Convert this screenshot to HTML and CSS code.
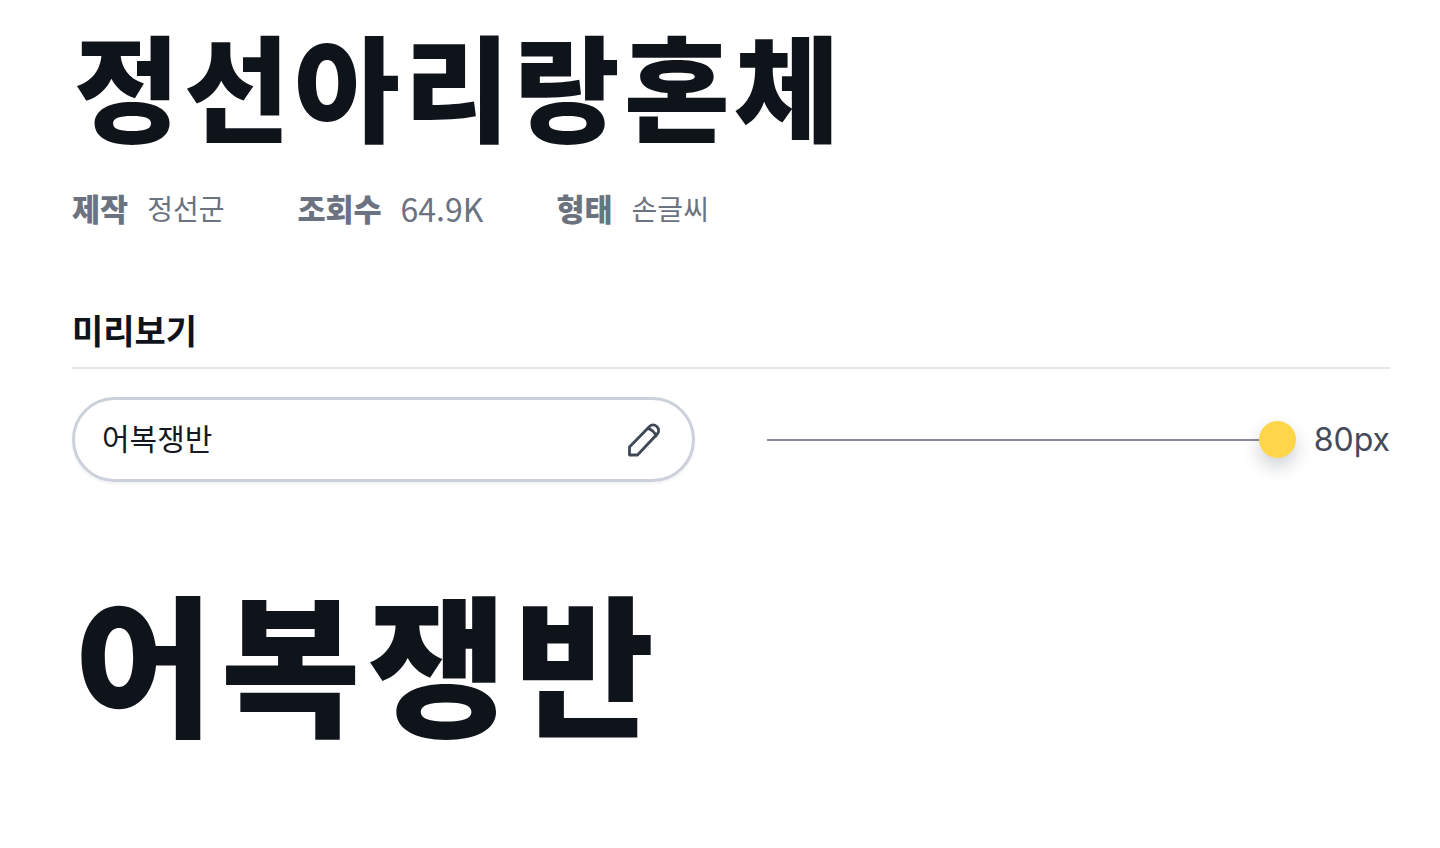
FILE: index.html
```html
<!DOCTYPE html>
<html lang="ko">
<head>
  <meta charset="UTF-8">
  <title>정선아리랑혼체</title>
  <link rel="stylesheet" href="styles.css">
</head>
<body>
  <main class="font-page">
    <h1 class="font-title">정선아리랑혼체</h1>

    <ul class="meta">
      <li class="meta-item"><b>제작</b><span>정선군</span></li>
      <li class="meta-item"><b>조회수</b><span class="meta-num">64.9K</span></li>
      <li class="meta-item"><b>형태</b><span>손글씨</span></li>
    </ul>

    <h2 class="section-title">미리보기</h2>

    <div class="controls">
      <div class="text-field">
        <span class="text-value">어복쟁반</span>
        <svg class="pencil" viewBox="0 0 36 36" width="36" height="36" fill="none" stroke="#3f4856" stroke-width="2.8" stroke-linejoin="round" stroke-linecap="round">
          <path d="M3.5 33V25L23.5 4.5C25.5 2.5 28.5 2.5 30.8 4.5C33.2 6.8 33.2 9.8 31.2 12L11.5 33Z"/>
          <path d="M22 6.5C25 7 29.5 11 30 14"/>
        </svg>
      </div>
      <div class="slider">
        <div class="track"></div>
        <div class="thumb"></div>
      </div>
      <span class="size-label">80px</span>
    </div>

    <p class="preview">어복쟁반</p>
  </main>
</body>
</html>
```

FILE: styles.css
```css
/* 기본 */
body {
  margin: 0;
  background-color: #fff;
  font-family: "Noto Sans CJK KR", "Noto Sans", sans-serif;
  color: #0f131a;
}

.font-page {
  height: 848px;
  box-sizing: border-box;
  padding: 0 50px 0 72px;
  overflow: hidden;
}

.font-title {
  margin: 17px 0 0 2px;
  font-size: 115px;
  line-height: 132px;
  font-weight: 900;
  letter-spacing: 4.2px;
}

.meta {
  display: flex;
  gap: 73px;
  list-style: none;
  margin: 39px 0 0;
  padding: 0;
  color: #6b7280;
  font-size: 28px;
  line-height: 40px;
}

.meta-item {
  display: flex;
  gap: 19px;
}

.meta-item b {
  font-size: 30.5px;
  font-weight: 900;
}

.meta-num {
  font-size: 32px;
}

.section-title {
  margin: 0;
  margin-top: 79px;
  padding-bottom: 14px;
  border-bottom: 2px solid #e3e5ea;
  font-size: 34px;
  line-height: 46px;
  font-weight: 700;
}

.controls {
  display: flex;
  align-items: center;
  margin-top: 28px;
}

.text-field {
  flex: none;
  display: flex;
  align-items: center;
  justify-content: space-between;
  box-sizing: border-box;
  width: 623px;
  height: 85px;
  padding: 0 30px 0 27px;
  border: 3px solid #ccd0db;
  border-radius: 43px;
  box-shadow: 0 2px 3px rgba(17, 24, 39, 0.06);
}

.text-value {
  font-size: 30px;
  line-height: 40px;
  margin-top: -6px;
  color: #151922;
}

.pencil {
  flex: none;
}

.slider {
  flex: 1;
  display: flex;
  align-items: center;
  margin: 0 18px 0 72px;
}

.track {
  flex: 1;
  height: 2px;
  background-color: #868b9e;
}

.thumb {
  flex: none;
  width: 37px;
  height: 37px;
  border-radius: 50%;
  background-color: #ffd54a;
  box-shadow: 0 9px 18px rgba(17, 24, 39, 0.2);
}

.size-label {
  font-family: Inter, "Noto Sans", sans-serif;
  font-size: 32px;
  line-height: 40px;
  color: #434b5b;
}

.preview {
  margin: 82px 0 0 2px;
  font-size: 152px;
  line-height: 190px;
  font-weight: 900;
  letter-spacing: 7px;
}
```
